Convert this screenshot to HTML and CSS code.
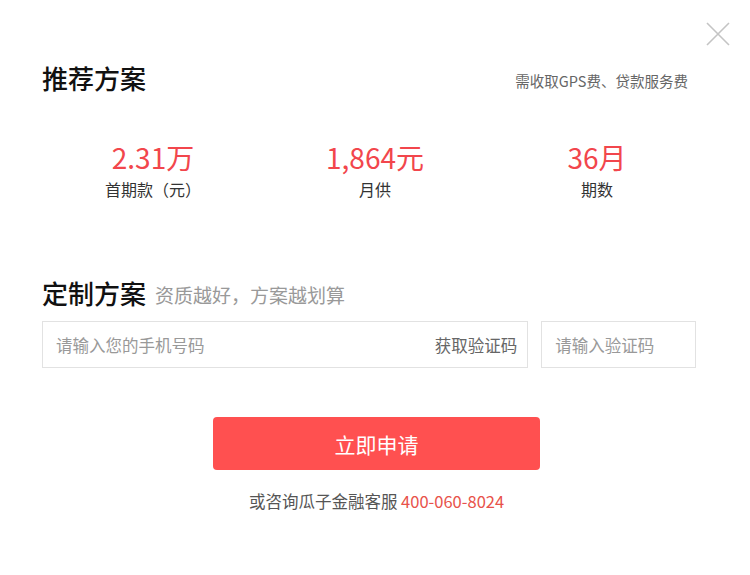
FILE: index.html
```html
<!DOCTYPE html>
<html lang="zh-CN">
<head>
    <meta charset="UTF-8">
    <meta name="viewport" content="width=device-width, initial-scale=1.0">
    <title>推荐方案</title>
    <link rel="stylesheet" href="styles.css">
</head>
<body>
    <main class="dialog">
        <button class="close" aria-label="关闭">
            <svg width="24" height="24" viewBox="0 0 24 24">
                <path d="M1 1 L23 23 M23 1 L1 23" stroke="#c4c4c4" stroke-width="1.6" fill="none"/>
            </svg>
        </button>

        <section class="plan">
            <div class="head">
                <h2 class="title">推荐方案</h2>
                <p class="note">需收取GPS费、贷款服务费</p>
            </div>
            <div class="stats">
                <div class="stat">
                    <p class="value">2.31万</p>
                    <p class="label">首期款（元）</p>
                </div>
                <div class="stat">
                    <p class="value">1,864元</p>
                    <p class="label">月供</p>
                </div>
                <div class="stat">
                    <p class="value">36月</p>
                    <p class="label">期数</p>
                </div>
            </div>
        </section>

        <section class="custom">
            <div class="head head--left">
                <h2 class="title">定制方案</h2>
                <p class="sub">资质越好，方案越划算</p>
            </div>
            <div class="fields">
                <div class="field field--phone">
                    <span class="placeholder">请输入您的手机号码</span>
                    <span class="get-code">获取验证码</span>
                </div>
                <div class="field field--code">
                    <span class="placeholder">请输入验证码</span>
                </div>
            </div>
        </section>

        <div class="actions">
            <button class="apply">立即申请</button>
            <p class="hotline">或咨询瓜子金融客服 <span class="phone">400-060-8024</span></p>
        </div>
    </main>
</body>
</html>
```

FILE: styles.css
```css
body{
    margin: 0;
    background: #fff;
    font-family: "Noto Sans CJK SC", "Noto Sans", sans-serif;
    color: #333;
}

p, h2{
    margin: 0;
}

.dialog{
    position: relative;
    width: 750px;
    height: 575px;
}

.close{
    position: absolute;
    top: 22px;
    left: 706px;
    width: 24px;
    height: 24px;
    padding: 0;
    border: none;
    background: none;
}
.close svg{
    display: block;
}

.plan, .custom{
    padding: 0 54px 0 42px;
}

.plan{
    padding-top: 58px;
}

.head{
    display: flex;
    justify-content: space-between;
    align-items: center;
    height: 40px;
}
.head--left{
    justify-content: flex-start;
}

.title{
    font-size: 26px;
    font-weight: 500;
    color: #111;
    line-height: 40px;
}

.note{
    font-size: 14.5px;
    color: #666;
    margin-right: 8px;
    margin-top: 4px;
}

.sub{
    font-size: 19px;
    color: #999;
    margin-left: 9px;
    margin-top: 3px;
}

.stats{
    display: grid;
    grid-template-columns: repeat(3, 222px);
    margin-top: 39px;
    text-align: center;
}

.value{
    font-size: 28px;
    line-height: 40px;
    color: #f2464c;
}

.label{
    font-size: 16px;
    line-height: 22px;
    margin-top: 1px;
    color: #333;
}

.custom{
    margin-top: 73px;
}

.fields{
    display: flex;
    gap: 13px;
    margin-top: 8px;
}

.field{
    box-sizing: border-box;
    height: 47px;
    border: 1px solid #e2e2e2;
    display: flex;
    align-items: center;
    justify-content: space-between;
    padding: 0 10px 0 13px;
    font-size: 16.5px;
}
.field--phone{
    width: 487px;
}
.field--code{
    width: 155px;
}

.placeholder{
    color: #999;
}
.get-code{
    color: #666;
}

.actions{
    display: flex;
    flex-direction: column;
    align-items: center;
    padding-left: 3px;
    margin-top: 49px;
}

.apply{
    width: 327px;
    height: 53px;
    border: none;
    border-radius: 4px;
    background: #ff5050;
    color: #fff;
    font-family: inherit;
    font-size: 21px;
}

.hotline{
    margin-top: 19px;
    font-size: 16.5px;
    line-height: 24px;
    color: #555;
}
.phone{
    color: #e8524a;
}
```
